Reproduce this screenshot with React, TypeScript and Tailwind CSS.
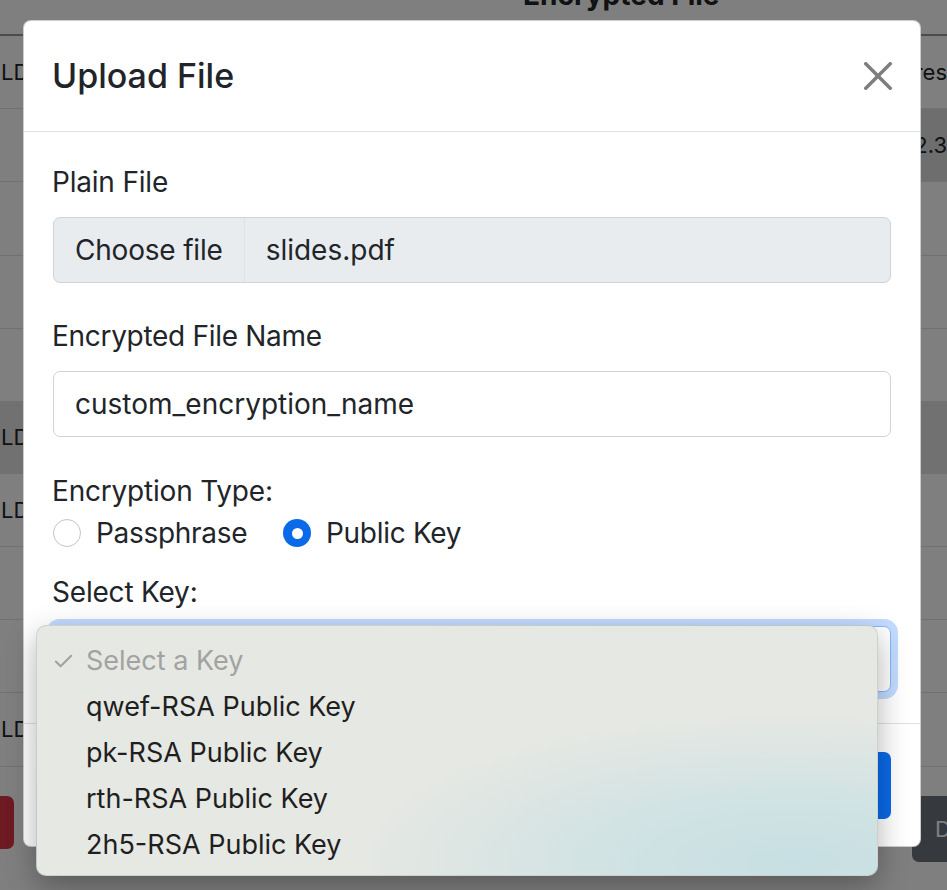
import { Check } from 'lucide-react';

const keyOptions = ['qwef-RSA Public Key', 'pk-RSA Public Key', 'rth-RSA Public Key', '2h5-RSA Public Key'];

function CloseIcon() {
  return (
    <svg viewBox="0 0 16 16" className="h-[28px] w-[28px]" fill="#000" opacity={0.5}>
      <path d="M.293.293a1 1 0 0 1 1.414 0L8 6.586 14.293.293a1 1 0 1 1 1.414 1.414L9.414 8l6.293 6.293a1 1 0 0 1-1.414 1.414L8 9.414l-6.293 6.293a1 1 0 0 1-1.414-1.414L6.586 8 .293 1.707a1 1 0 0 1 0-1.414z" />
    </svg>
  );
}

export default function App() {
  return (
    <div className="relative h-[890px] w-[947px] overflow-hidden bg-white font-['Inter','Noto_Sans',sans-serif] text-[#212529]">
      {/* Page behind the modal */}
      <div className="text-[22px]">
        <div className="flex h-[36px] items-end border-b-2 border-[#999]">
          <div className="mb-[25px] ml-[523px] whitespace-nowrap text-[28px] font-bold leading-none">Encrypted File</div>
        </div>
        <div className="flex h-[73px] items-center border-b border-[#dee2e6]">
          <div className="w-[921px] pl-[1px]">LD</div>
          <div className="whitespace-nowrap pl-[1px]">res</div>
        </div>
        <div className="flex h-[73px] border-b border-[#dee2e6]">
          <div className="w-[910px]" />
          <div className="flex flex-1 items-center whitespace-nowrap bg-[#dcdcdc]">42.3</div>
        </div>
        <div className="h-[74px] border-b border-[#dee2e6]" />
        <div className="h-[73px] border-b border-[#dee2e6]" />
        <div className="h-[73px] border-b border-[#dee2e6]" />
        <div className="flex h-[72px] items-center border-b border-[#dee2e6] bg-[#e2e2e2]">
          <div className="pl-[1px]">LD</div>
        </div>
        <div className="flex h-[73px] items-center border-b border-[#dee2e6]">
          <div className="pl-[1px]">LD</div>
        </div>
        <div className="h-[73px] border-b border-[#dee2e6]" />
        <div className="h-[73px] border-b border-[#dee2e6]" />
        <div className="flex h-[74px] items-center border-b border-[#dee2e6]">
          <div className="pl-[1px]">LD</div>
        </div>
        <div className="mt-[29px] flex items-start">
          <div className="-ml-[46px] flex h-[53px] w-[60px] items-center rounded-[7px] bg-[#dc3545] text-white">Del</div>
          <div className="-mr-[65px] ml-auto flex h-[66px] w-[100px] items-center rounded-[7px] bg-[#6c757d] pl-[23px] text-white">Download</div>
        </div>
      </div>

      {/* Backdrop */}
      <div className="absolute inset-0 bg-black/50" />

      {/* Modal */}
      <div className="absolute left-[23px] top-[20px] w-[898px] rounded-[8px] border border-black/20 bg-white text-[28px] leading-[42px]">
        <div className="flex h-[111px] items-center justify-between border-b border-[#dee2e6] px-[29px]">
          <h5 className="-ml-[1px] text-[34px] font-medium leading-[52px]">Upload File</h5>
          <button className="mr-[-1px] flex h-[28px] w-[28px] items-center justify-center">
            <CloseIcon />
          </button>
        </div>

        <div className="px-[29px] pb-[31px] pt-[29px]">
          <div className="-ml-[1px] tracking-[-0.2px]">Plain File</div>
          <div className="mt-[14px] flex h-[66px] overflow-hidden rounded-[7px] border border-[#ced4da] bg-[#e9ecef]">
            <div className="flex items-center border-r border-[#dee2e6] px-[21px] tracking-[-0.2px]">Choose file</div>
            <div className="flex items-center px-[21px]">slides.pdf</div>
          </div>

          <div className="mt-[32px] -ml-[1px] tracking-[-0.3px]">Encrypted File Name</div>
          <div className="mt-[14px] flex h-[66px] items-center rounded-[7px] border border-[#ced4da] bg-white px-[21px]">
            custom_encryption_name
          </div>

          <div className="mt-[33px] -ml-[1px] tracking-[-0.2px]">Encryption Type:</div>
          <div className="flex h-[42px] items-center">
            <div className="flex w-[230px] items-center">
              <span className="h-[28px] w-[28px] rounded-full border border-[#c4c4c4] bg-white" />
              <span className="ml-[15px] tracking-[-0.3px]">Passphrase</span>
            </div>
            <div className="flex items-center">
              <span className="flex h-[28px] w-[28px] items-center justify-center rounded-full bg-[#0a6ae8]">
                <span className="h-[11px] w-[11px] rounded-full bg-white" />
              </span>
              <span className="ml-[15px] tracking-[-0.3px]">Public Key</span>
            </div>
          </div>

          <div className="mt-[17px] -ml-[1px] tracking-[-0.2px]">Select Key:</div>
          <div className="mt-[13px] h-[66px] rounded-[7px] border border-[#86b7fe] bg-white shadow-[0_0_0_7px_rgba(13,110,253,0.25)]" />
        </div>

        <div className="flex justify-end border-t border-[#dee2e6] px-[29px] pb-[27px] pt-[28px]">
          <button className="h-[67px] rounded-[7px] bg-[#0a6ae8] px-[21px] text-white">Upload</button>
        </div>
      </div>

      {/* Native select popup */}
      <div className="absolute left-[36px] top-[625px] w-[842px] rounded-[10px] border border-black/10 bg-[radial-gradient(ellipse_70%_80%_at_90%_95%,#c7dfe3_0%,#d2e3e3_35%,#e6e8e3_75%)] pb-[7px] pt-[12px] text-[27px] leading-[46px] text-[#1f1f1f] shadow-[0_10px_30px_rgba(0,0,0,0.3)]">
        <div className="flex items-center text-[#a2a3a1]">
          <div className="flex w-[49px] justify-end pr-[11px]">
            <Check className="h-[23px] w-[23px]" strokeWidth={2.2} />
          </div>
          <span>Select a Key</span>
        </div>
        {keyOptions.map((k) => (
          <div key={k} className="pl-[49px]">
            {k}
          </div>
        ))}
      </div>
    </div>
  );
}
